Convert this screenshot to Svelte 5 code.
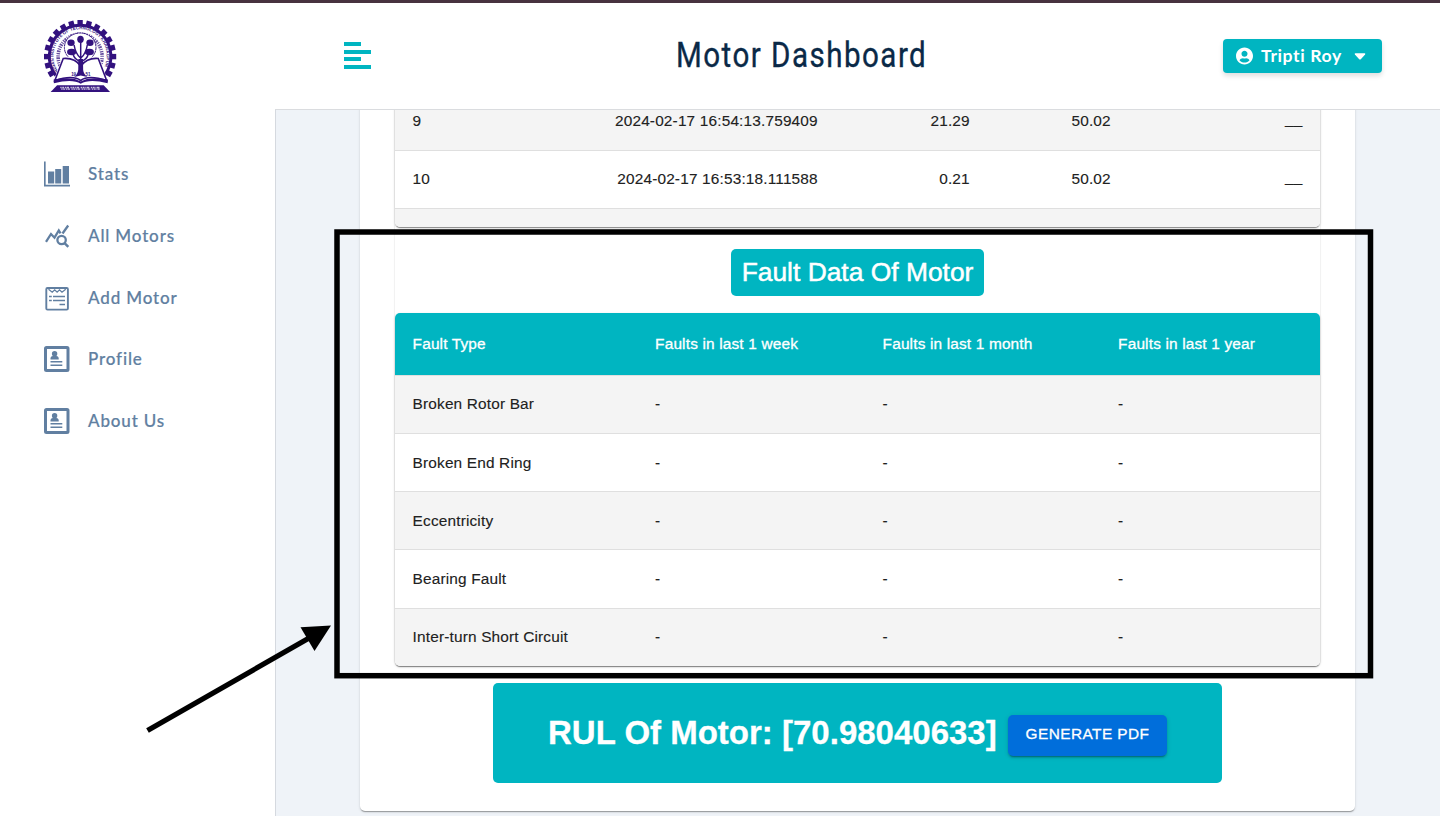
<script>
  const menu = [
    { label: 'Stats', icon: 'stats' },
    { label: 'All Motors', icon: 'query' },
    { label: 'Add Motor', icon: 'form' },
    { label: 'Profile', icon: 'card' },
    { label: 'About Us', icon: 'card' }
  ];
  const readings = [
    ['9', '2024-02-17 16:54:13.759409', '21.29', '50.02', '__'],
    ['10', '2024-02-17 16:53:18.111588', '0.21', '50.02', '__'],
    ['', '', '', '', '']
  ];
  const headings = ['Fault Type', 'Faults in last 1 week', 'Faults in last 1 month', 'Faults in last 1 year'];
  const faults = ['Broken Rotor Bar', 'Broken End Ring', 'Eccentricity', 'Bearing Fault', 'Inter-turn Short Circuit'];
  const teeth = Array.from({ length: 17 }, (_, i) => (i - 8) * 15);
</script>

<div class="page">
  <header>
    <svg class="logo" viewBox="0 0 74 73" width="73" height="73" preserveAspectRatio="none">
      <defs>
        <path id="outer-arc" d="M15.200 52.500A26.900 26.900 0 1 1 58 52.500" />
      </defs>
      {#each teeth as angle}
        <rect x="33.900" y="0" width="5.4" height="6" fill="#32117e" transform="rotate({angle} 36.6 36.6)" />
      {/each}
      <path d="M12 55.600A31.200 31.200 0 1 1 61.200 55.600" fill="#fff" stroke="#32117e" stroke-width="3" />
      <text class="ring"><textPath href="#outer-arc" textLength="112">INDIAN INSTITUTE OF TECHNOLOGY KHARAGPUR</textPath></text>
      <path d="M17.200 47.500A22.300 22.300 0 1 1 56 47.500" fill="none" stroke="#32117e" stroke-width="3.600" stroke-dasharray="1.2 .8 1.8 .9 1 1.2" opacity=".75" />
      <ellipse cx="36.700" cy="27.500" rx="16" ry="14.500" fill="#fff" stroke="#32117e" stroke-width="1" stroke-dasharray="3 .5" />
      <path d="M8 66 18.500 37Q30 35 37.200 44 45 35 56 37L66.500 66Z" fill="#fff" />
      <path d="M11 60.500 19.500 38.500Q31 37.500 37.200 46 44 37.500 55 38.500L63.500 60.500Q45 54.500 37.200 60.500 29 54.500 11 60.500Z" fill="#fff" stroke="#32117e" stroke-width="1.6" />
      <path d="M9.800 59.500 10 63.300Q29 58.500 37.200 63.800 46 58.500 64.500 63.300L64.800 59.500Q46 56 37.200 61.500 29 56 9.800 59.500Z" fill="#32117e" />
      <g fill="#32117e">
        <ellipse cx="37" cy="19.300" rx="3.300" ry="3.600" />
        <ellipse cx="27.400" cy="22.800" rx="3.700" ry="3.200" />
        <ellipse cx="46.600" cy="22.800" rx="3.700" ry="3.200" />
        <ellipse cx="28" cy="32" rx="4.600" ry="3.200" />
        <ellipse cx="46" cy="32" rx="4.600" ry="3.200" />
        <path d="M34.900 39 34.700 50Q34 54.500 30.500 57L37.200 55.500 44 57Q40.100 54 39.700 50L39.500 39Z" />
      </g>
      <path d="M37.200 43V21M37 38Q32 34 30.500 25M37.400 38Q42.400 34 43.900 25M36.500 41Q31 40 29 33M38 41Q43.500 40 45.200 33" fill="none" stroke="#32117e" stroke-width="1.500" />
      <text class="year" x="27.500" y="56.500">19</text>
      <text class="year" x="42" y="56.500">51</text>
      <path d="M13.300 65.200H60.500L67 72H6.700Z" fill="#32117e" />
      <path d="M16.500 67.500H57.500M17.500 69.200H56.500" stroke="#fff" stroke-width="1.300" stroke-dasharray="1.4 .6 2 .8 1 .5 2.6 1.4" opacity=".75" />
    </svg>
    <div class="toggle"><i></i><i></i><i></i><i></i></div>
    <h1>Motor Dashboard</h1>
    <button class="user">
      <svg viewBox="0 0 496 512" width="17" height="18"><path fill="#fff" d="M248 8C111 8 0 119 0 256s111 248 248 248 248-111 248-248S385 8 248 8zm0 96c48.600 0 88 39.400 88 88s-39.400 88-88 88-88-39.400-88-88 39.400-88 88-88zm0 344c-58.700 0-111.300-26.600-146.500-68.200 18.800-35.400 55.600-59.800 98.500-59.800 2.400 0 4.800.4 7.100 1.100 13 4.200 26.600 6.900 40.900 6.900 14.300 0 28-2.700 40.900-6.900 2.300-.7 4.700-1.100 7.100-1.100 42.900 0 79.700 24.400 98.500 59.800C359.300 421.400 306.700 448 248 448z" /></svg>
      <span>Tripti Roy</span>
      <svg class="caret" viewBox="0 0 12 7" width="12" height="7"><path d="M1.300.2H10.700Q11.800.5 11.100 1.500L6.800 6.200Q6 6.900 5.200 6.200L.9 1.500Q.2.500 1.300.2Z" fill="#fff" /></svg>
    </button>
  </header>

  <div class="body">
    <nav>
      {#each menu as item}
        <a class="item">
          <svg viewBox="0 0 26 26" width="26" height="26" fill="none" stroke="#617fa1">
            {#if item.icon === 'stats'}
              <path d="M.8.500V24.600H26" stroke-width="1.700" />
              <path d="M4 10.500h6.200v12H4zM11.200 8h6v14.500h-6zM18.700 5h6.300v17.500h-6.300z" fill="#617fa1" stroke="none" />
            {:else if item.icon === 'query'}
              <path d="M2 18.800 7 11 10.500 14.700 14.800 7.500 16.500 10.300M18.500 10.500 24.200 2.500" stroke-width="2.300" />
              <circle cx="17.600" cy="17" r="4.200" stroke-width="2.300" />
              <path d="M20.600 20.200 24.300 23.800" stroke-width="2.500" />
            {:else if item.icon === 'form'}
              <rect x="2.300" y="3" width="21.600" height="21.600" rx="1.200" stroke-width="1.900" />
              <path d="M4.500 4.200 8.200 7.200 10.700 4.800 13.100 7.200 15.500 4.800 18 7.200 21.700 4.200" stroke-width="1.300" />
              <path d="M5 11.500h2.800M9 11.500H21M5 15.500h2.800M9 15.500H21M15.500 19.500H21" stroke-width="1.700" />
            {:else}
              <rect x="1.500" y="1.500" width="22.500" height="23" rx="1" stroke-width="3" />
              <circle cx="10.600" cy="7.700" r="2.700" fill="#617fa1" stroke="none" />
              <path d="M6.500 13.500V12Q7 9.800 10.600 9.800T14.700 12V13.500Z" fill="#617fa1" stroke="none" />
              <path d="M6.500 15.800H18.300M6.500 19.300H18.300" stroke-width="1.600" />
            {/if}
          </svg>
          <span>{item.label}</span>
        </a>
      {/each}
    </nav>

    <main>
      <section class="card">
        <div class="group">
          <div class="paper readings">
            {#each readings as row}
              <div class="row reading">
                {#each row as cell}<span>{cell}</span>{/each}
              </div>
            {/each}
          </div>
          <h2>Fault Data Of Motor</h2>
          <div class="paper">
            <div class="row fault head">
              {#each headings as h}<span>{h}</span>{/each}
            </div>
            {#each faults as name}
              <div class="row fault"><span>{name}</span><span>-</span><span>-</span><span>-</span></div>
            {/each}
          </div>
        </div>
        <div class="rul">
          <strong>RUL Of Motor: [70.98040633]</strong>
          <button class="pdf">GENERATE PDF</button>
        </div>
      </section>
    </main>
  </div>

  <svg class="marks" viewBox="0 0 1440 816" width="1440" height="816">
    <rect x="337" y="232" width="1033.500" height="443.700" fill="none" stroke="#000" stroke-width="5.500" />
    <path d="M147.500 730.500 310 637.500" stroke="#000" stroke-width="5.200" />
    <path d="M331 625.500 300.500 627.300 314.500 651Z" fill="#000" />
  </svg>
</div>

<style>
  :global(body) { background: #fff; }
  .page { position: relative; width: 1440px; height: 816px; overflow: hidden; box-sizing: border-box; border-top: 3px solid #47323f; display: flex; flex-direction: column; font-family: 'Liberation Sans', Arial, sans-serif; color: #212121; }
  header { flex: none; height: 106px; display: flex; align-items: flex-start; background: #fff; }
  .logo { margin: 17px 1px 0 43.500px; flex: none; }
  .ring { font: 700 4.400px 'Liberation Sans', sans-serif; fill: #32117e; }
  .year { font: 700 4.500px 'Liberation Sans', sans-serif; fill: #32117e; }
  .toggle { margin: 39px 0 0 226.500px; width: 27px; height: 27px; display: flex; flex-direction: column; justify-content: space-between; flex: none; }
  .toggle i { height: 3.800px; width: 27px; background: #00b5c1; }
  .toggle i:nth-child(odd) { width: 17px; }
  h1 { margin: 31px 0 0 304.500px; width: 250px; font: 400 35.200px/42px Roboto, sans-serif; letter-spacing: 1.750px; color: #0a2947; white-space: nowrap; transform: scaleX(.84); transform-origin: 0 50%; -webkit-text-stroke: .35px #0a2947; }
  button { border: 0; padding: 0; margin: 0; color: #fff; }
  .user { margin: 36px 0 0 297.500px; width: 159px; height: 34px; border-radius: 4px; background: #00b5c1; box-shadow: 0 3px 5px rgba(0, 0, 0, .13); display: flex; align-items: center; padding-left: 13px; font: 700 17.600px/34px Lato, sans-serif; letter-spacing: .6px; flex: none; }
  .user span { margin-left: 8px; width: 82px; text-align: left; white-space: nowrap; }
  .user .caret { margin-left: 11px; }
  .body { flex: 1; min-height: 0; display: flex; }
  nav { width: 275px; flex: none; padding: 34px 0 0 44px; box-sizing: border-box; background: #fff; }
  .item { display: flex; align-items: center; height: 61.750px; color: #617fa1; font: 500 17px/24px Lato, sans-serif; letter-spacing: .85px; -webkit-text-stroke: .2px #617fa1; }
  .item:nth-child(3) { padding-top: 1px; height: 60.750px; }
  .item span { margin-left: 18px; }
  .item svg { flex: none; }
  main { flex: 1; overflow: hidden; border-top: 1px solid #dadcdf; border-left: 1px solid #d5d9df; background: #eff3f8; padding-left: 84px; }
  .card { width: 995px; height: 725px; margin-top: -24px; box-sizing: border-box; padding: 0 35px; background: #fff; border-radius: 5px; box-shadow: 0 2px 1px -1px rgba(0, 0, 0, .2), 0 1px 1px rgba(0, 0, 0, .14), 0 1px 3px rgba(0, 0, 0, .12); }
  .group { box-shadow: 0 0 1px 1px rgba(0, 0, 0, .06); border-radius: 5px; display: flex; flex-direction: column; align-items: center; }
  .paper { width: 925px; border-radius: 5px; overflow: hidden; box-shadow: 0 2px 1px -1px rgba(0, 0, 0, .25), 0 1px 1px rgba(0, 0, 0, .2), 0 1px 3px rgba(0, 0, 0, .15); background: #fff; flex: none; }
  .readings { height: 141px; }
  .row { display: grid; height: 58.200px; box-sizing: border-box; border-bottom: 1px solid #dfdfdf; align-items: center; font-size: 15.400px; letter-spacing: .165px; line-height: 22px; -webkit-text-stroke: .12px currentColor; }
  .row:nth-child(odd) { background: #f4f4f4; }
  .row span { padding: 0 17.600px; white-space: nowrap; }
  .reading { grid-template-columns: 110px 330.400px 152px 141px 191.600px; height: 58.200px; padding-bottom: 2px; }
  .readings .row:first-child { height: 65px; padding-top: 7px; }
  .reading span:not(:first-child) { text-align: right; }
  .reading span:last-child { padding-bottom: 3px; }
  .fault { grid-template-columns: 242.500px 227.500px 235.500px 1fr; }
  .fault:nth-child(even) { background: #f4f4f4; }
  .fault:nth-child(odd) { background: #fff; }
  .fault.head { height: 62.700px; background: #00b5c1; color: #fff; -webkit-text-stroke: .3px #fff; }
  .fault:nth-child(n + 3) { padding-top: .8px; }
  .fault:nth-child(5) { height: 59px; padding-top: 0; }
  .fault:last-child { border-bottom: 0; padding: 0 0 1px; height: 56.700px; }
  h2 { margin: 22px 0 17px; width: 253px; height: 47px; border-radius: 5px; background: #00b5c1; color: #fff; text-align: center; font-weight: 400; font-size: 26.400px; line-height: 46px; -webkit-text-stroke: .5px #fff; white-space: nowrap; }
  .rul { margin: 17px auto 0; width: 729px; height: 100px; border-radius: 5px; background: #00b5c1; color: #fff; display: flex; align-items: center; justify-content: center; box-sizing: border-box; }
  strong { font-size: 33px; line-height: 40px; width: 449px; white-space: nowrap; -webkit-text-stroke: .3px #fff; }
  .pdf { margin: 5px 0 0 11px; width: 159px; height: 41px; border-radius: 5px; background: #006edb; font: 400 15.400px/38px 'Liberation Sans', sans-serif; letter-spacing: .44px; padding-bottom: 2px; -webkit-text-stroke: .3px #fff; box-shadow: 0 3px 1px -2px rgba(0, 0, 0, .2), 0 2px 2px rgba(0, 0, 0, .14), 0 1px 5px rgba(0, 0, 0, .12); }
  .marks { position: absolute; left: 0; top: -3px; pointer-events: none; }
</style>
